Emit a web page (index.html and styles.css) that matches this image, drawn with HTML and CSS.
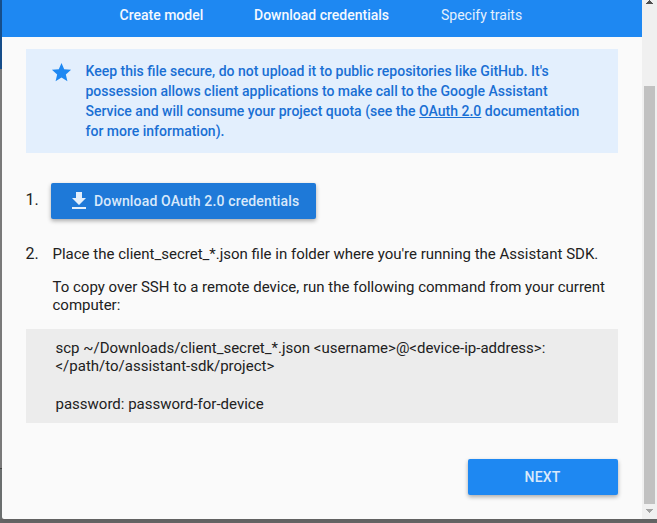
FILE: index.html
```html
<!DOCTYPE html>
<html lang="en">
<head>
<meta charset="utf-8">
<title>Download credentials</title>
<link rel="stylesheet" href="styles.css">
</head>
<body>
<div class="backdrop">
  <div class="edge"><div class="edge-top"></div><div class="edge-mid"></div><div class="edge-low"></div></div>
  <main class="dialog">
    <div class="content">
      <nav class="steps">
        <span class="step active create">Create model</span>
        <span class="step active download">Download credentials</span>
        <span class="step">Specify traits</span>
      </nav>
      <section class="notice">
        <svg class="star" viewBox="0 0 24 24"><path d="M12 17.27 18.18 21l-1.64-7.03L22 9.24l-7.19-.61L12 2 9.19 8.63 2 9.24l5.46 4.73L5.82 21z"/></svg>
        <p>Keep this file secure, do not upload it to public repositories like GitHub. It's<br>possession allows client applications to make call to the Google Assistant<br>Service and will consume your project quota (see the <a>OAuth 2.0</a> documentation<br>for more information).</p>
      </section>
      <div class="row first">
        <span class="num">1.</span>
        <button class="btn get"><svg viewBox="0 0 24 24"><path d="M19 9h-4V3H9v6H5l7 7 7-7zM5 18v2h14v-2H5z"/></svg><span>Download OAuth 2.0 credentials</span></button>
      </div>
      <div class="row second">
        <span class="num">2.</span>
        <div class="text">
          <p>Place the client_secret_*.json file in folder where you're running the Assistant SDK.</p>
          <p class="copy">To copy over SSH to a remote device, run the following command from your current<br>computer:</p>
        </div>
      </div>
      <div class="code">
        <p>scp ~/Downloads/client_secret_*.json &lt;username&gt;@&lt;device-ip-address&gt;:<br>&lt;/path/to/assistant-sdk/project&gt;</p>
        <p class="password">password: password-for-device</p>
      </div>
      <button class="btn next">NEXT</button>
    </div>
    <div class="scrollbar">
      <svg class="up" viewBox="0 0 7 4" shape-rendering="crispEdges"><path d="M3 0h1v1h1v1h1v1h1v1H0V3h1V2h1V1h1z"/></svg>
      <div class="thumb"></div>
      <svg class="down" viewBox="0 0 7 4" shape-rendering="crispEdges"><path d="M0 0h7v1H6v1H5v1H4v1H3V3H2V2H1V1H0z"/></svg>
    </div>
  </main>
</div>
</body>
</html>
```
FILE: styles.css
```css
* { box-sizing: border-box; }
body { margin: 0; font: 15px/18px Roboto, sans-serif; color: #212121; overflow: hidden; }
p { margin: 0; white-space: nowrap; }
.backdrop {
  width: 657px; height: 523px;
  display: grid; grid-template: 519px 4px / 2px 655px;
  background: #666;
}
.edge { display: flex; flex-direction: column; }
.edge-top { height: 69px; background: #174f8c; }
.edge-mid { height: 400px; background: #7c7c7c; border-bottom: 1px solid #444; }
.edge-low { flex: 1; background: #6d7171; }
.dialog {
  display: flex; height: 519px; background: #fafafa;
  border-radius: 0 0 0 2px; box-shadow: 0 3px 5px rgba(0,0,0,.05);
}
.content { width: 640px; display: flex; flex-direction: column; }
.steps {
  height: 37px; padding: 6px 0 0 117.5px; display: flex;
  background: #1e88f2; color: #e4f0fd; font-size: 14px; white-space: nowrap;
}
.active { color: #f4f9ff; font-weight: 500; }
.create { width: 134.5px; }
.download { width: 187px; }
.notice {
  height: 104px; margin: 12px 24px 0; padding: 12px 0 0 24px; display: flex;
  background: #e3effd; color: #1a6fd4; font-weight: 500; font-size: 14px; line-height: 20px;
}
.notice a { text-decoration: underline; }
.star { width: 23px; height: 23px; margin-right: 12.5px; fill: #1e88f2; }
.row { display: flex; padding-left: 23.5px; }
.num { width: 27px; font-size: 16px; }
.first { margin-top: 30px; height: 36px; }
.first .num { width: 25.5px; padding-top: 8px; }
.btn {
  height: 36px; border: 0; border-radius: 2px; padding: 0;
  font: 500 14px/36px Roboto, sans-serif; color: #d9e9fb; background: #1e88f2;
  box-shadow: 0 2px 4px rgba(0,0,0,.32); white-space: nowrap;
}
.get {
  width: 265px; display: flex; align-items: center; background: #1e79d8;
  padding-left: 16px; letter-spacing: .15px;
}
.get svg { width: 24px; height: 24px; fill: #e3effb; margin-right: 3px; }
.second { margin-top: 26px; height: 84px; }
.copy { margin-top: 15px; }
.code { height: 94px; margin: 0 24px; padding: 10px 0 0 29.5px; background: #ececec; }
.password { margin-top: 20px; }
.next { width: 150px; margin: 36px 24px 0 auto; padding-right: 1px; letter-spacing: .15px; }
.scrollbar { width: 15px; background: #f0f0f0; display: flex; flex-direction: column; align-items: center; }
.scrollbar svg { width: 7px; height: 4px; }
.up { fill: #505050; }
.thumb { width: 11px; height: 418px; margin-top: 82px; background: #c1c1c1; }
.down { margin-top: 5px; fill: #a3a3a3; }
```
